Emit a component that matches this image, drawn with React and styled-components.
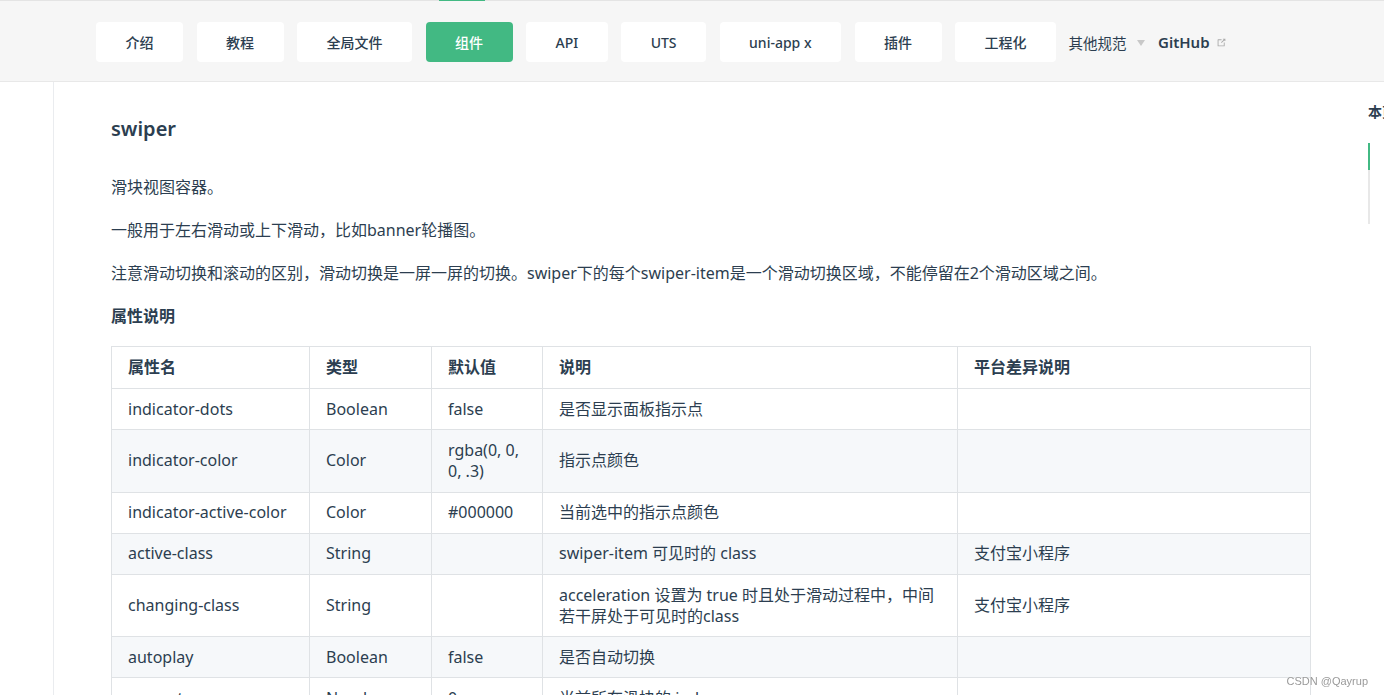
import React from "react";
import styled, { createGlobalStyle } from "styled-components";

const GlobalStyle = createGlobalStyle`
  html, body {
    margin: 0;
    padding: 0;
    background: #fff;
    overflow: hidden;
  }
  body {
    font-family: "Noto Sans", "Noto Sans CJK SC", sans-serif;
    color: #2c3e50;
    -webkit-font-smoothing: antialiased;
  }
`;

const TopStrip = styled.div`
  display: flex;
  height: 1px;
  background: #e4e4e4;
`;

const TopMark = styled.span`
  margin-left: 439px;
  width: 46px;
  height: 1px;
  background: #42b983;
`;

const Header = styled.header`
  box-sizing: border-box;
  display: flex;
  align-items: center;
  gap: 13.5px;
  height: 81px;
  padding: 2px 0 0 96px;
  background: #f6f6f6;
  border-bottom: 1px solid #e8e8e8;
`;

const NavButton = styled.a`
  box-sizing: border-box;
  display: flex;
  align-items: center;
  justify-content: center;
  height: 40px;
  padding: 0 29.5px;
  border-radius: 4px;
  font-size: 14px;
  font-weight: 500;
  white-space: nowrap;
  background: ${(p) => (p.$active ? "#42b983" : "#fff")};
  color: ${(p) => (p.$active ? "#fff" : "#2c3e50")};
`;

const NavText = styled.span`
  display: flex;
  align-items: center;
  margin-left: -1px;
  font-size: 14.5px;
  white-space: nowrap;
`;

const Caret = styled.span`
  width: 0;
  height: 0;
  margin: 2px 0 0 10px;
  border-left: 4px solid transparent;
  border-right: 4px solid transparent;
  border-top: 6px solid #c8c8c8;
`;

const GitHubLink = styled.a`
  display: flex;
  align-items: center;
  gap: 6px;
  font-size: 15px;
  font-weight: 600;
  color: #2c3e50;
`;

const Layout = styled.div`
  display: flex;
  width: 1584px;
`;

const Sidebar = styled.aside`
  flex: 0 0 53px;
  min-height: 620px;
  border-right: 1px solid #eaecef;
`;

const Main = styled.main`
  box-sizing: border-box;
  flex: 0 0 1313px;
  padding: 32px 57px 0;
`;

const Title = styled.h2`
  margin: 0 0 30px;
  font-size: 20px;
  font-weight: 600;
  line-height: 30px;
`;

const Paragraph = styled.p`
  margin: 17px 0 0;
  font-size: 16px;
  line-height: 26px;
`;

const SubTitle = styled.h4`
  margin: 17px 0 17px;
  font-size: 16px;
  font-weight: 700;
  line-height: 26px;
`;

const Table = styled.table`
  width: 1199px;
  table-layout: fixed;
  border-collapse: collapse;
  font-size: 16px;
  line-height: 21px;

  th,
  td {
    border: 1px solid #dfe2e5;
    padding: 9.6px 16px;
    text-align: left;
    vertical-align: middle;
  }
  th {
    font-weight: 600;
    padding: 10.1px 16px;
  }
  tbody tr:nth-child(2n) {
    background: #f6f8fa;
  }
`;

const Toc = styled.aside`
  flex: 0 0 200px;
  padding-top: 20px;
`;

const TocTitle = styled.div`
  font-size: 14px;
  font-weight: 600;
  line-height: 20px;
  white-space: nowrap;
`;

const TocList = styled.ul`
  margin: 21px 0 0;
  padding: 0;
  list-style: none;
  border-left: 2px solid #e8e8e8;
`;

const TocItem = styled.li`
  height: 27px;
  margin-left: -2px;
  padding-left: 14px;
  font-size: 14px;
  line-height: 27px;
  white-space: nowrap;
  border-left: 2px solid ${(p) => (p.$active ? "#42b983" : "transparent")};
  color: ${(p) => (p.$active ? "#42b983" : "#2c3e50")};
`;

const Watermark = styled.div`
  position: fixed;
  right: 16px;
  bottom: 8px;
  font-family: "Liberation Sans", sans-serif;
  font-size: 11px;
  color: #9a9a9a;
  text-shadow: 0 0 2px #fff;
`;

const ExternalIcon = () => (
  <svg width="11" height="11" viewBox="0 0 100 100" fill="#aaa">
    <path d="M18.8,85.1h56l0,0c2.2,0,4-1.8,4-4v-32h-8v28h-48v-48h28v-8h-32l0,0c-2.2,0-4,1.8-4,4v56C14.8,83.3,16.6,85.1,18.8,85.1z" />
    <polygon points="45.7,48.7 51.3,54.3 77.2,28.5 77.2,37.2 85.2,37.2 85.2,14.9 62.8,14.9 62.8,22.9 71.5,22.9" />
  </svg>
);

const navItems = ["介绍", "教程", "全局文件", "组件", "API", "UTS", "uni-app x", "插件", "工程化"];

const rows = [
  ["indicator-dots", "Boolean", "false", "是否显示面板指示点", ""],
  ["indicator-color", "Color", "rgba(0, 0, 0, .3)", "指示点颜色", ""],
  ["indicator-active-color", "Color", "#000000", "当前选中的指示点颜色", ""],
  ["active-class", "String", "", "swiper-item 可见时的 class", "支付宝小程序"],
  [
    "changing-class",
    "String",
    "",
    "acceleration 设置为 true 时且处于滑动过程中，中间若干屏处于可见时的class",
    "支付宝小程序",
  ],
  ["autoplay", "Boolean", "false", "是否自动切换", ""],
  ["current", "Number", "0", "当前所在滑块的 index", ""],
  ["interval", "Number", "5000", "自动切换时间间隔", ""],
];

const App = () => (
  <>
    <GlobalStyle />
    <TopStrip>
      <TopMark />
    </TopStrip>
    <Header>
      {navItems.map((item) => (
        <NavButton key={item} $active={item === "组件"}>
          {item}
        </NavButton>
      ))}
      <NavText>
        其他规范
        <Caret />
      </NavText>
      <GitHubLink>
        GitHub
        <ExternalIcon />
      </GitHubLink>
    </Header>
    <Layout>
      <Sidebar />
      <Main>
        <Title>swiper</Title>
        <Paragraph>滑块视图容器。</Paragraph>
        <Paragraph>一般用于左右滑动或上下滑动，比如banner轮播图。</Paragraph>
        <Paragraph>
          注意滑动切换和滚动的区别，滑动切换是一屏一屏的切换。swiper下的每个swiper-item是一个滑动切换区域，不能停留在2个滑动区域之间。
        </Paragraph>
        <SubTitle>属性说明</SubTitle>
        <Table>
          <colgroup>
            <col style={{ width: 198 }} />
            <col style={{ width: 122 }} />
            <col style={{ width: 111 }} />
            <col style={{ width: 415 }} />
            <col style={{ width: 353 }} />
          </colgroup>
          <thead>
            <tr>
              <th>属性名</th>
              <th>类型</th>
              <th>默认值</th>
              <th>说明</th>
              <th>平台差异说明</th>
            </tr>
          </thead>
          <tbody>
            {rows.map((r) => (
              <tr key={r[0]}>
                {r.map((cell, i) => (
                  <td key={i}>{cell}</td>
                ))}
              </tr>
            ))}
          </tbody>
        </Table>
      </Main>
      <Toc>
        <TocTitle>本页目录</TocTitle>
        <TocList>
          <TocItem $active>属性说明</TocItem>
          <TocItem>示例</TocItem>
          <TocItem>Tips</TocItem>
        </TocList>
      </Toc>
    </Layout>
    <Watermark>CSDN @Qayrup</Watermark>
  </>
);

export default App;
